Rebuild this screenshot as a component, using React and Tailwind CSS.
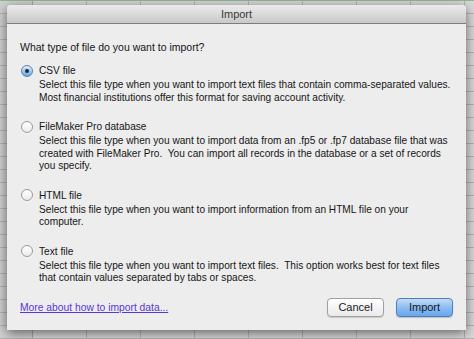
import React, { useState } from 'react';

// Import dialog floating over a spreadsheet window
const options = [
  {
    id: 'csv',
    label: 'CSV file',
    lines: [
      'Select this file type when you want to import text files that contain comma-separated values.',
      'Most financial institutions offer this format for saving account activity.',
    ],
  },
  {
    id: 'fmp',
    label: 'FileMaker Pro database',
    lines: [
      'Select this file type when you want to import data from an .fp5 or .fp7 database file that was',
      'created with FileMaker Pro.  You can import all records in the database or a set of records',
      'you specify.',
    ],
  },
  {
    id: 'html',
    label: 'HTML file',
    lines: [
      'Select this file type when you want to import information from an HTML file on your',
      'computer.',
    ],
  },
  {
    id: 'text',
    label: 'Text file',
    lines: [
      'Select this file type when you want to import text files.  This option works best for text files',
      'that contain values separated by tabs or spaces.',
    ],
  },
];

const Radio = ({ checked }) => (
  <span
    className={
      checked
        ? 'w-[12px] h-[12px] rounded-full border border-[#5a7fb0] bg-gradient-to-b from-[#d6e6fa] to-[#6ea6e6] flex items-center justify-center shadow-[inset_0_1px_1px_rgba(255,255,255,0.7)]'
        : 'w-[12px] h-[12px] rounded-full border border-[#9a9a9a] bg-gradient-to-b from-[#ffffff] to-[#ececec] shadow-[0_1px_0_rgba(255,255,255,0.6)]'
    }
  >
    {checked && <span className="w-[4px] h-[4px] rounded-full bg-[#1d2b3d]" />}
  </span>
);

const SheetBackground = () => {
  const rows = Array.from({ length: 26 });
  const cols = Array.from({ length: 10 });
  return (
    <div className="w-full h-full flex flex-col bg-[#d9d9d9]">
      <div className="h-[4px] bg-[#a9d3ae] border-b border-[#8fb895]" />
      {rows.map((_, r) => (
        <div key={r} className="flex h-[13px] shrink-0 border-b border-[#b3b3b3]">
          {cols.map((_, c) => (
            <div
              key={c}
              className={
                c === 0
                  ? 'w-[33px] shrink-0 border-r border-[#a8a8a8] bg-[#d0d0d0]'
                  : 'w-[54px] shrink-0 border-r border-[#b3b3b3]'
              }
            />
          ))}
        </div>
      ))}
    </div>
  );
};

export default function App() {
  const [selected, setSelected] = useState('csv');

  return (
    <div
      className="relative w-[474px] h-[339px] overflow-hidden"
      style={{ fontFamily: '"Liberation Sans", Arial, sans-serif' }}
    >
      <SheetBackground />

      {/* Dialog */}
      <div className="absolute left-[7px] top-[5px] w-[459px] h-[325px] flex flex-col bg-[#ededed] rounded-t-[4px] shadow-[0_3px_12px_rgba(0,0,0,0.55)]">
        <div className="h-[19px] shrink-0 flex items-center justify-center rounded-t-[4px] bg-gradient-to-b from-[#ebebeb] to-[#c9c9c9] border-b border-[#7d7d7d] text-[11px] text-[#3a3a3a]">
          Import
        </div>

        <div className="flex-1 flex flex-col pl-[13px] pr-[12px] pt-[17px] text-[10.15px] text-[#151515]">
          <div className="leading-[13px] text-[10.5px]">What type of file do you want to import?</div>

          <div className="flex flex-col gap-[16px] mt-[10px]">
            {options.map((opt) => (
              <div key={opt.id} className="flex flex-col" onClick={() => setSelected(opt.id)}>
                <div className="flex items-center gap-[6px] h-[13px] pl-[1px]">
                  <Radio checked={selected === opt.id} />
                  <span className="leading-[13px]">{opt.label}</span>
                </div>
                <div className="mt-[2px] pl-[19px] leading-[12.5px] whitespace-pre">
                  {opt.lines.map((line, i) => (
                    <div key={i}>{line}</div>
                  ))}
                </div>
              </div>
            ))}
          </div>

          <div className="mt-auto mb-[13px] flex items-center justify-between">
            <a href="#" className="text-[#5836d8] underline leading-[13px] text-[10.3px]">
              More about how to import data...
            </a>
            <div className="flex items-center gap-[12px] pr-[1px]">
              <button className="w-[57px] h-[19px] rounded-[4px] border border-[#a0a0a0] bg-gradient-to-b from-[#ffffff] to-[#eaeaea] text-[11px] text-[#1a1a1a] shadow-[0_1px_1px_rgba(0,0,0,0.15)]">
                Cancel
              </button>
              <button className="w-[57px] h-[19px] rounded-[4px] border border-[#4f7fbf] bg-gradient-to-b from-[#c3dcf8] via-[#8dbcf0] to-[#67a7ee] text-[11px] text-[#101828] shadow-[0_1px_1px_rgba(0,0,0,0.2)]">
                Import
              </button>
            </div>
          </div>
        </div>
      </div>
    </div>
  );
}
